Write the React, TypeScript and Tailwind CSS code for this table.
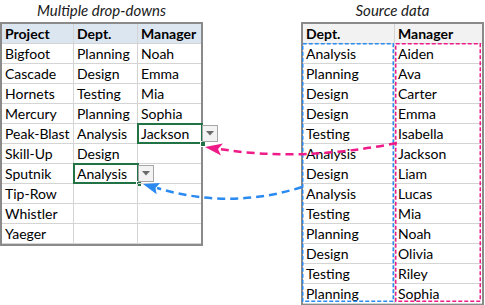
import React from "react"

const font = { fontFamily: "Lato, 'Liberation Sans', sans-serif" }

const projects = [
  ["Bigfoot", "Planning", "Noah"],
  ["Cascade", "Design", "Emma"],
  ["Hornets", "Testing", "Mia"],
  ["Mercury", "Planning", "Sophia"],
  ["Peak-Blast", "Analysis", "Jackson"],
  ["Skill-Up", "Design", ""],
  ["Sputnik", "Analysis", ""],
  ["Tip-Row", "", ""],
  ["Whistler", "", ""],
  ["Yaeger", "", ""],
]

const source = [
  ["Analysis", "Aiden"],
  ["Planning", "Ava"],
  ["Design", "Carter"],
  ["Design", "Emma"],
  ["Testing", "Isabella"],
  ["Analysis", "Jackson"],
  ["Design", "Liam"],
  ["Analysis", "Lucas"],
  ["Testing", "Mia"],
  ["Planning", "Noah"],
  ["Design", "Olivia"],
  ["Testing", "Riley"],
  ["Planning", "Sophia"],
]

// selected cells: [row, col]
const selected = [
  [4, 2],
  [6, 1],
]

function DropButton() {
  return (
    <div className="absolute left-[calc(100%+1px)] top-[1px] z-10 flex h-[17px] w-[16px] items-center justify-center border border-[#a6a6a6] bg-[#f3f3f3]">
      <svg width="8" height="5" viewBox="0 0 8 5">
        <path d="M0 0 H8 L4 4.5 Z" fill="#6b6b6b" />
      </svg>
    </div>
  )
}

function Cell({
  text,
  active,
  last,
}: {
  text: string
  active?: boolean
  last?: boolean
}) {
  return (
    <div
      className={`relative h-[20px] border-b border-[#d4d4d4] pl-[3px] text-[14px] leading-[20px] text-black ${
        last ? "" : "border-r"
      }`}
    >
      {text}
      {active && (
        <>
          <div className="pointer-events-none absolute -left-[1px] -top-[1px] bottom-[-1px] right-[-2px] border-2 border-[#217346]" />
          <div className="absolute bottom-[-4px] right-[-5px] h-[6px] w-[6px] border border-white bg-[#217346]" />
          <DropButton />
        </>
      )}
    </div>
  )
}

export default function App() {
  return (
    <div className="relative h-[305px] w-[485px] overflow-hidden bg-white" style={font}>
      <div className="flex gap-[98px]">
        {/* ── Multiple drop-downs ── */}
        <div className="w-[203px]">
          <div className="h-[22px] text-center text-[15px] italic leading-[20px] text-[#1a1a1a]">
            Multiple drop-downs
          </div>
          <div className="grid grid-cols-[72px_64px_63px] border-2 border-[#8a8a8a]">
            {["Project", "Dept.", "Manager"].map((h, i) => (
              <div
                key={h}
                className={`h-[20px] border-b border-[#d4d4d4] bg-[#dce6f1] pl-[3px] text-[14px] font-bold leading-[20px] text-black ${
                  i < 2 ? "border-r" : ""
                }`}
              >
                {h}
              </div>
            ))}
            {projects.map((row, r) =>
              row.map((t, c) => (
                <Cell
                  key={`${r}-${c}`}
                  text={t}
                  last={c === 2}
                  active={selected.some(([sr, sc]) => sr === r && sc === c)}
                />
              ))
            )}
          </div>
        </div>

        {/* ── Source data ── */}
        <div className="w-[183px]">
          <div className="h-[22px] text-center text-[15px] italic leading-[20px] text-[#1a1a1a]">
            Source data
          </div>
          <div className="grid grid-cols-[92px_87px] border-2 border-[#8a8a8a]">
            <div className="h-[20px] border-b border-r border-[#d4d4d4] bg-[#f2f2f2] pl-[3px] text-[14px] font-bold leading-[20px] text-black">
              Dept.
            </div>
            <div className="h-[20px] border-b border-[#d4d4d4] bg-[#f2f2f2] pl-[3px] text-[14px] font-bold leading-[20px] text-black">
              Manager
            </div>
            {source.map(([d, m], i) => (
              <React.Fragment key={i}>
                <div className="h-[20px] border-b border-r border-[#d4d4d4] pl-[3px] text-[14px] leading-[20px] text-black">
                  {d}
                </div>
                <div className="h-[20px] border-b border-[#d4d4d4] pl-[3px] text-[14px] leading-[20px] text-black">
                  {m}
                </div>
              </React.Fragment>
            ))}
          </div>
        </div>
      </div>

      {/* copy marquees and arrows lie over both tables */}
      <svg className="pointer-events-none absolute left-0 top-0" width="485" height="305">
        <rect
          x="302.75"
          y="43.75"
          width="90.5"
          height="257.5"
          fill="none"
          stroke="#2a8af0"
          strokeWidth="1.5"
          strokeDasharray="4 2"
        />
        <rect
          x="395.75"
          y="43.75"
          width="84.5"
          height="257.5"
          fill="none"
          stroke="#ee1b88"
          strokeWidth="1.5"
          strokeDasharray="4 2"
        />
        <path
          d="M397 143 Q300 162 220 149"
          fill="none"
          stroke="#ee1b88"
          strokeWidth="2.5"
          strokeDasharray="8 5"
        />
        <path d="M205 147 L223 143.5 L218 149 L221 155.5 Z" fill="#ee1b88" />
        <path
          d="M302 187 Q230 210 157 188"
          fill="none"
          stroke="#2a8af0"
          strokeWidth="2.5"
          strokeDasharray="8 5"
        />
        <path d="M143 184 L160 182.9 L155.5 188 L156.6 194.3 Z" fill="#2a8af0" />
      </svg>
    </div>
  )
}
